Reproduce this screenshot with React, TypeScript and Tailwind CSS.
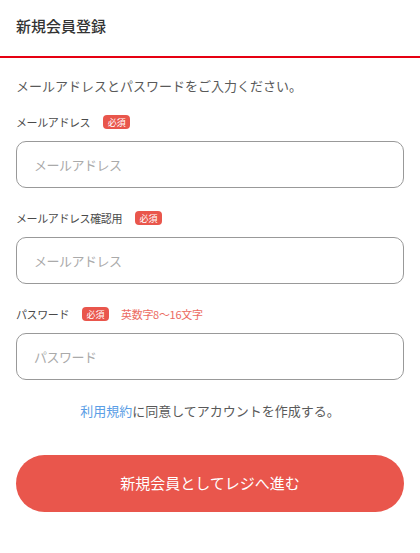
import React from "react";

const font = { fontFamily: '"Noto Sans CJK JP", "Noto Sans", sans-serif' };

function Badge() {
  return (
    <span className="inline-flex items-center justify-center h-[14px] w-[27px] rounded-[4px] bg-[#e9564c] text-white text-[9px] leading-none">
      必須
    </span>
  );
}

function Field({ label, placeholder, extra }: { label: string; placeholder: string; extra?: string }) {
  return (
    <div className="flex flex-col">
      <div className="flex items-center h-[18px] gap-[13px]">
        <span className="text-[11px] tracking-[-0.4px] text-[#4a4a4a]">{label}</span>
        <Badge />
        {extra && <span className="text-[11px] tracking-[-0.3px] text-[#ec6b62] -ml-[1px]">{extra}</span>}
      </div>
      <div className="mt-[10px] h-[47px] rounded-[10px] border border-[#999] flex items-center px-[17px]">
        <span className="text-[13px] tracking-[-0.5px] text-[#aaa]">{placeholder}</span>
      </div>
    </div>
  );
}

export default function App() {
  return (
    <div className="w-[420px] h-[553px] bg-white" style={font}>
      <div className="h-[58px] flex items-start pt-[15px] px-[16px] border-b-2 border-[#e60012]">
        <span className="text-[15px] font-medium text-[#333] leading-[22px]">新規会員登録</span>
      </div>
      <div className="px-[16px]">
        <p className="mt-[18px] text-[13px] text-[#595959] leading-[20px]">メールアドレスとパスワードをご入力ください。</p>
        <div className="mt-[17px]">
          <Field label="メールアドレス" placeholder="メールアドレス" />
        </div>
        <div className="mt-[21px]">
          <Field label="メールアドレス確認用" placeholder="メールアドレス" />
        </div>
        <div className="mt-[21px]">
          <Field label="パスワード" placeholder="パスワード" extra="英数字8〜16文字" />
        </div>
        <p className="mt-[21px] text-center text-[13px] text-[#595959] leading-[20px]">
          <span className="text-[#5a9ee6]">利用規約</span>に同意してアカウントを作成する。
        </p>
        <button className="mt-[34px] w-full h-[57px] rounded-full bg-[#e9564c] text-white text-[15px] flex items-center justify-center">
          新規会員としてレジへ進む
        </button>
      </div>
    </div>
  );
}
